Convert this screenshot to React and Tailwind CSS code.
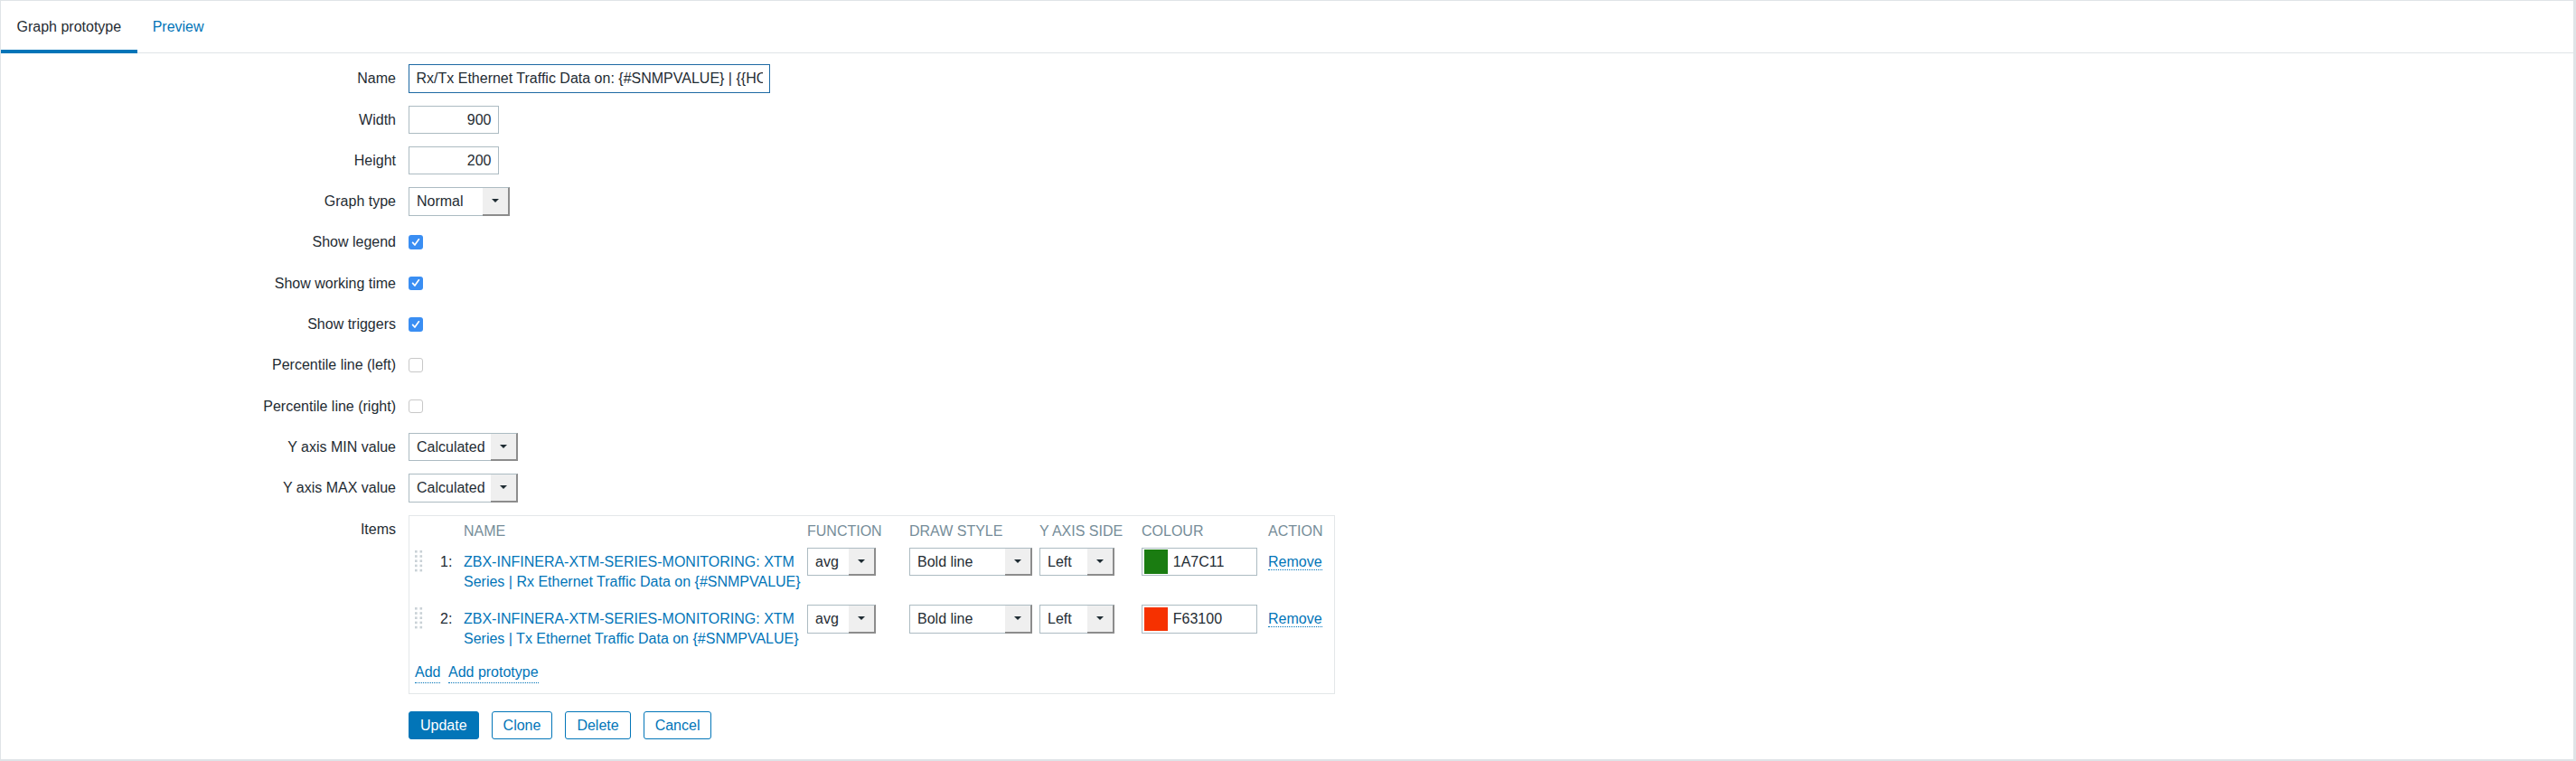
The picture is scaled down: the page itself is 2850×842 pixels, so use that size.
import React from "react";

const TXT = "text-[#1f2c33]";
const LINK = "text-[#0275b8]";

function Select({ value, className }) {
  return (
    <div className={`flex h-[31.4px] border border-[#acbbc2] bg-white ${className}`}>
      <div className={`flex-1 pl-[8px] leading-[29.4px] whitespace-nowrap overflow-hidden ${TXT}`}>{value}</div>
      <div className="-my-px -mr-px w-[30px] flex items-center justify-center bg-[#efefef] border-t border-r-2 border-b-2 border-t-[#acbbc2] border-r-[#8c8c8c] border-b-[#8c8c8c]">
        <div className="w-0 h-0 border-l-[4px] border-r-[4px] border-t-[4px] border-l-transparent border-r-transparent border-t-[#1f2c33]" />
      </div>
    </div>
  );
}

function Checkbox({ checked }) {
  if (checked) {
    return (
      <div className="w-[15.6px] h-[15.6px] rounded-[3px] bg-[#3a8ef3] flex items-center justify-center">
        <svg width="12" height="12" viewBox="0 0 12 12">
          <path d="M2.6 6.4 L4.9 9 L9.4 2.8" fill="none" stroke="#fff" strokeWidth="1.7" strokeLinecap="round" strokeLinejoin="round" />
        </svg>
      </div>
    );
  }
  return <div className="w-[15.6px] h-[15.6px] rounded-[3px] bg-white border border-[#c8c8c8]" />;
}

function Row({ label, children }) {
  return (
    <div className="flex">
      <div className={`w-[437px] shrink-0 text-right leading-[31.4px] ${TXT}`}>{label}</div>
      <div className="ml-[14px] flex items-center min-h-[31.4px]">{children}</div>
    </div>
  );
}

function Handle() {
  const dots = [];
  for (let r = 0; r < 5; r++) {
    for (let c = 0; c < 2; c++) {
      dots.push(<rect key={r + "-" + c} x={c * 5.5} y={r * 5.2} width="2.6" height="2.6" fill="#c9d1d6" />);
    }
  }
  return (
    <svg width="9" height="25" viewBox="0 0 9 25">
      {dots}
    </svg>
  );
}

function DotLink({ children }) {
  return <span className={`${LINK} border-b border-dotted border-[#0275b8]`}>{children}</span>;
}

function ItemRow({ n, line1, line2, color }) {
  return (
    <div className="flex items-start h-[63.4px]">
      <div className="w-[28px] pt-[3.2px]">
        <Handle />
      </div>
      <div className={`w-[26px] pt-[4.7px] leading-[22px] ${TXT}`}>{n}:</div>
      <div className={`w-[380px] pt-[4.7px] leading-[22px] whitespace-nowrap ${LINK}`}>
        <div>{line1}</div>
        <div>{line2}</div>
      </div>
      <div className="w-[113px]">
        <Select value="avg" className="w-[76px]" />
      </div>
      <div className="w-[144px]">
        <Select value="Bold line" className="w-[136px]" />
      </div>
      <div className="w-[113px]">
        <Select value="Left" className="w-[83px]" />
      </div>
      <div className="w-[140px]">
        <div className="flex items-center h-[31.4px] w-[128px] border border-[#acbbc2] pl-[1.7px] gap-[5.5px] bg-white">
          <div className="w-[26.6px] h-[26.4px]" style={{ backgroundColor: "#" + color }} />
          <span className={TXT}>{color}</span>
        </div>
      </div>
      <div className="flex-1 pt-[4.7px] leading-[22px]">
        <DotLink>Remove</DotLink>
      </div>
    </div>
  );
}

export default function App() {
  return (
    <div className="w-[2850px] h-[842px] overflow-hidden bg-[#dfe4e7] pt-px pl-px pr-[3px] pb-[2px] font-['Liberation_Sans',Arial,sans-serif] text-[16px]">
      <div className="bg-white h-full">
        <div className="flex border-b border-[#dfe4e7] h-[58px]">
          <div className={`h-[58px] -mb-px px-[17.5px] pt-[18px] leading-[22px] border-b-4 border-[#0275b8] ${TXT}`}>Graph prototype</div>
          <div className={`h-[58px] px-[17px] pt-[18px] leading-[22px] ${LINK}`}>Preview</div>
        </div>

        <div className="flex flex-col gap-[13.9px] pt-[12.3px]">
          <Row label="Name">
            <div className={`h-[31.4px] w-[400px] border border-[#1d69a3] px-[7.5px] leading-[29.4px] ${TXT}`}>
              <div className="overflow-hidden whitespace-nowrap">Rx/Tx Ethernet Traffic Data on: {"{#SNMPVALUE}"} | {"{{HOST.HOST}}"}</div>
            </div>
          </Row>
          <Row label="Width">
            <div className={`h-[31.4px] w-[100px] border border-[#acbbc2] px-[7.5px] leading-[29.4px] text-right ${TXT}`}>900</div>
          </Row>
          <Row label="Height">
            <div className={`h-[31.4px] w-[100px] border border-[#acbbc2] px-[7.5px] leading-[29.4px] text-right ${TXT}`}>200</div>
          </Row>
          <Row label="Graph type">
            <Select value="Normal" className="w-[112px]" />
          </Row>
          <Row label="Show legend">
            <Checkbox checked />
          </Row>
          <Row label="Show working time">
            <Checkbox checked />
          </Row>
          <Row label="Show triggers">
            <Checkbox checked />
          </Row>
          <Row label="Percentile line (left)">
            <Checkbox />
          </Row>
          <Row label="Percentile line (right)">
            <Checkbox />
          </Row>
          <Row label="Y axis MIN value">
            <Select value="Calculated" className="w-[121px]" />
          </Row>
          <Row label="Y axis MAX value">
            <Select value="Calculated" className="w-[121px]" />
          </Row>

          <div className="flex">
            <div className={`w-[437px] shrink-0 text-right leading-[31.4px] ${TXT}`}>Items</div>
            <div className="ml-[14px] w-[1025px] border border-[#e3e7e9] pt-[6px] pl-[6px] pr-[6px] pb-[11px]">
              <div className="flex h-[29.3px] leading-[22px] text-[#768d99] whitespace-nowrap">
                <div className="w-[54px]" />
                <div className="w-[380px]">NAME</div>
                <div className="w-[113px]">FUNCTION</div>
                <div className="w-[144px]">DRAW STYLE</div>
                <div className="w-[113px]">Y AXIS SIDE</div>
                <div className="w-[140px]">COLOUR</div>
                <div className="flex-1">ACTION</div>
              </div>
              <ItemRow
                n="1"
                line1="ZBX-INFINERA-XTM-SERIES-MONITORING: XTM"
                line2="Series | Rx Ethernet Traffic Data on {#SNMPVALUE}"
                color="1A7C11"
              />
              <ItemRow
                n="2"
                line1="ZBX-INFINERA-XTM-SERIES-MONITORING: XTM"
                line2="Series | Tx Ethernet Traffic Data on {#SNMPVALUE}"
                color="F63100"
              />
              <div className="flex gap-[8.5px] leading-[22px]">
                <DotLink>Add</DotLink>
                <DotLink>Add prototype</DotLink>
              </div>
            </div>
          </div>

          <div className="flex gap-[14px] ml-[451px] mt-[5.5px]">
            <button className="h-[31.4px] px-[12px] rounded-[3px] border border-[#0275b8] bg-[#0275b8] text-white">Update</button>
            <button className={`h-[31.4px] px-[12px] rounded-[3px] border border-[#0275b8] bg-white ${LINK}`}>Clone</button>
            <button className={`h-[31.4px] px-[12px] rounded-[3px] border border-[#0275b8] bg-white ${LINK}`}>Delete</button>
            <button className={`h-[31.4px] px-[12px] rounded-[3px] border border-[#0275b8] bg-white ${LINK}`}>Cancel</button>
          </div>
        </div>
      </div>
    </div>
  );
}
